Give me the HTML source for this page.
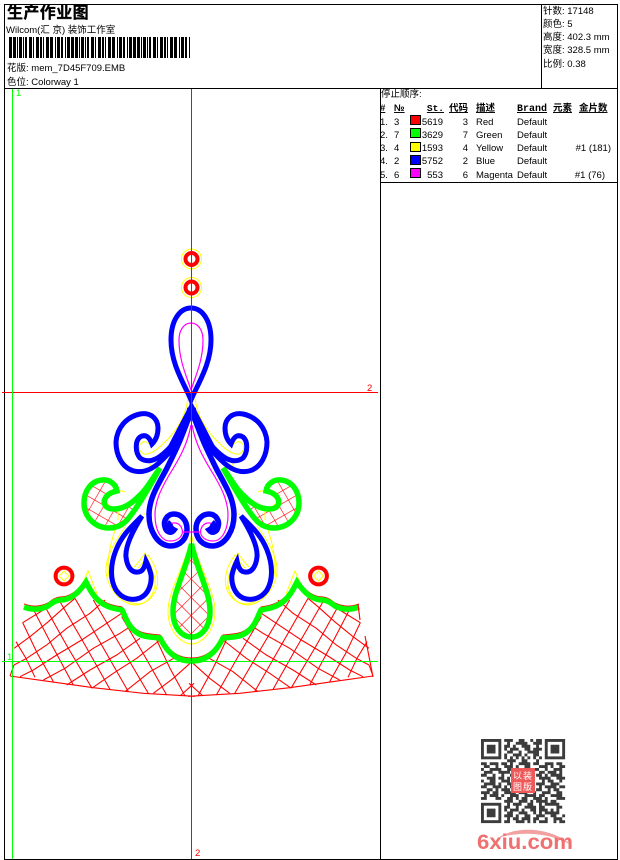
<!DOCTYPE html>
<html><head><meta charset="utf-8"><style>
html,body{margin:0;padding:0;background:#fff;width:620px;height:860px;overflow:hidden}
svg{display:block}
text{font-family:"Liberation Sans","WenQuanYi Zen Hei","Noto Sans CJK SC",sans-serif;font-size:9.5px;fill:#000}
.h{font-weight:bold;text-decoration:underline}
</style></head><body>
<svg width="620" height="860" viewBox="0 0 620 860" xmlns="http://www.w3.org/2000/svg">
<defs>
<pattern id="ph" width="13" height="13" patternUnits="userSpaceOnUse" patternTransform="translate(191 560) rotate(45)">
<path d="M0 0H13M0 0V13" stroke="#f00" stroke-width="1.2" fill="none"/></pattern>
<pattern id="pl" width="11" height="11" patternUnits="userSpaceOnUse" patternTransform="translate(100 490) rotate(30)">
<path d="M0 0H11M0 0V11" stroke="#f00" stroke-width="1.2" fill="none"/></pattern>
<g id="half">
 <!-- big hatch: drawn in 3x coordinates -->
 <g transform="translate(10 590) scale(.33333)" fill="none" stroke="#f00" stroke-width="3.2">
  <path d="M18 155L48 205L75 262M38 98L82 190L130 275M70 58L128 170L190 285M105 50L172 170L245 293M147 30L225 165L300 298M195 25L275 165L355 305M250 30L330 165L415 310M335 80L405 200L470 315M440 150L480 235L525 318"/>
  <path d="M12 175L60 140L115 95L165 50L195 25M12 225L50 205L110 165L170 115L240 70L285 30M30 260L70 240L140 195L215 150L290 100L335 70M100 270L165 235L250 175L330 130L360 110M170 285L240 240L320 195L390 145M245 295L310 250L380 205L450 150M345 305L420 245L500 200M430 310L490 265L540 220M510 318L552 280M38 98L100 60"/>
  <path d="M0 258L100 272L250 293L400 310L555 319M0 258L12 225"/>
 </g>
 <path d="M24 607C32 610 40 610 48 606C52 603 54 601 60 600C70 600 78 594 86 582C90 590 95 600 105 605C112 609 118 609 122 610C126 618 128 626 136 632C142 637 150 637 160 638C165 648 172 656 180 659C185 661 190 661 192 661" transform="translate(0 -3)" fill="none" stroke="#f00" stroke-width="1"/>
 <path d="M80 590L88 571L97 594" fill="none" stroke="#ff0" stroke-width="1"/>
 <path d="M24 607C32 610 40 610 48 606C52 603 54 601 60 600C70 600 78 594 86 582C90 590 95 600 105 605C112 609 118 609 122 610C126 618 128 626 136 632C142 637 150 637 160 638C165 648 172 656 180 659C185 661 190 661 192 661" fill="none" stroke="#0f0" stroke-width="5.5"/>
 <!-- leaf -->
 <path d="M158 472L140 503L125 525L113 529L93 523L83 503L90 487L103 479L113 483L117 491L107 495L104 503L112 509L125 507L143 490Z" fill="url(#pl)"/>
 <path d="M107 500C112 490 120 490 125 492M108 504C112 509 115 509 120 508C135 505 150 490 160 468M150 460V470M115 530C105 560 105 585 122 598C135 607 147 606 155 592C160 582 158 568 148 555C144 562 141 565 138 568M118 508V520M143 514H152" fill="none" stroke="#ff0" stroke-width="1"/>
 <path d="M160 468C150 482 146 490 138 497C130 505 122 509 114 509C105 509 102 503 106 497C109 493 113 492 117 491C116 484 109 479 102 480C91 481 84 491 84 503C84 518 96 528 109 528C122 528 128 520 136 508C145 495 152 482 160 468Z" fill="none" stroke="#0f0" stroke-width="5.5"/>
 <!-- top spiral -->
 <path d="M188 399C185 418 176 432 164 443C157 450 150 455 144 454C138 452 138 444 143 442C147 441 150 444 152 447" fill="none" stroke="#ff0" stroke-width="1"/>
 <path d="M190 412C186 430 178 445 167 455C157 466 147 474 134 471C122 468 116 455 116 442C117 428 126 417 140 414C151 412 158 419 158 428C158 436 155 441 152 444C149 436 145 434 140 437C135 441 135 452 140 458C147 463 155 461 163 454C174 445 183 432 190 412Z" fill="none" stroke="#00f" stroke-width="5"/>
 <path d="M191 402L165 452L178 450L191 420Z" fill="#00f"/>
 <!-- heart -->
 <path d="M190 408C186 430 176 450 166 470C156 488 149 500 149 515C149 530 157 545 170 546C181 546 187 538 187 529C187 520 181 514 174 514C167 514 163 521 165 527C166 532 171 534 174 530C170 528 169 524 171 522" fill="none" stroke="#00f" stroke-width="5.5"/>
 <path d="M191 425C187 447 177 462 168 477C160 491 155 502 155 515C155 530 161 541 170 541C178 541 184 536 182 529C180 522 172 522 172 524M183 532H192" fill="none" stroke="#f0f" stroke-width="1.2"/>
 <!-- lower curl -->
 <path d="M126 526C112 545 105 560 106 572C108 590 122 604 135 605C148 605 156 592 155 580C154 572 149 562 145 553C141 560 137 564 134 567" fill="none" stroke="#ff0" stroke-width="1"/>
 <path d="M142 516C131 527 122 535 116 550C110 565 110 580 116 590C122 599 132 601 140 598C149 594 152 583 151 575C150 570 148 565 146 561C145 566 143 572 138 572C131 573 127 566 126 557C125 547 132 532 142 516Z" fill="none" stroke="#00f" stroke-width="5"/>
</g>
</defs>

<!-- frame -->
<g shape-rendering="crispEdges" fill="none" stroke="#000" stroke-width="1">
<rect x="4.5" y="4.5" width="613" height="855"/>
<path d="M4 88.5H618M541.5 5V88M380.5 88V860M380 182.5H618"/>
</g>

<!-- header -->
<text x="7" y="18" style="font-size:16px;font-weight:bold;letter-spacing:.4px;stroke:#000;stroke-width:.3">生产作业图</text>
<text x="6" y="33">Wilcom(汇 京) 装饰工作室</text>
<line x1="9" y1="47.5" x2="191" y2="47.5" stroke="#000" stroke-width="21" shape-rendering="crispEdges" stroke-dasharray="3 1 3 1 1 1 3 1 1 1 2 2 3 1 1 2 3 1 2 1 1 2 3 1 3 2 1 1 3 1 2 2 1 1 3 1"/>
<text x="7" y="71">花版: mem_7D45F709.EMB</text>
<text x="7" y="85">色位: Colorway 1</text>

<text x="543" y="14">针数: 17148</text>
<text x="543" y="27">颜色: 5</text>
<text x="543" y="40">高度: 402.3 mm</text>
<text x="543" y="53">宽度: 328.5 mm</text>
<text x="543" y="67">比例: 0.38</text>

<!-- table -->
<text x="381" y="97">停止顺序:</text>
<g>
<text x="380" y="111" class="h">#</text>
<text x="394" y="111" class="h">№</text>
<text x="444" y="111" class="h" text-anchor="end" style="font-family:'Liberation Mono',monospace">St.</text>
<text x="449" y="111" class="h">代码</text>
<text x="476" y="111" class="h">描述</text>
<text x="517" y="111" class="h" style="font-family:'Liberation Mono',monospace;font-size:10px">Brand</text>
<text x="553" y="111" class="h">元素</text>
<text x="579" y="111" class="h">金片数</text>
</g>
<g shape-rendering="crispEdges" stroke="#000">
<rect x="410.5" y="115.5" width="10" height="9" fill="#f00"/>
<rect x="410.5" y="128.5" width="10" height="9" fill="#0f0"/>
<rect x="410.5" y="142.5" width="10" height="9" fill="#ff0"/>
<rect x="410.5" y="155.5" width="10" height="9" fill="#00f"/>
<rect x="410.5" y="168.5" width="10" height="9" fill="#f0f"/>
</g>
<g>
<text x="380" y="125">1.</text><text x="394" y="125">3</text><text x="443" y="125" text-anchor="end">5619</text><text x="468" y="125" text-anchor="end">3</text><text x="476" y="125">Red</text><text x="517" y="125">Default</text>
<text x="380" y="138">2.</text><text x="394" y="138">7</text><text x="443" y="138" text-anchor="end">3629</text><text x="468" y="138" text-anchor="end">7</text><text x="476" y="138">Green</text><text x="517" y="138">Default</text>
<text x="380" y="151">3.</text><text x="394" y="151">4</text><text x="443" y="151" text-anchor="end">1593</text><text x="468" y="151" text-anchor="end">4</text><text x="476" y="151">Yellow</text><text x="517" y="151">Default</text><text x="611" y="151" text-anchor="end">#1 (181)</text>
<text x="380" y="164">4.</text><text x="394" y="164">2</text><text x="443" y="164" text-anchor="end">5752</text><text x="468" y="164" text-anchor="end">2</text><text x="476" y="164">Blue</text><text x="517" y="164">Default</text>
<text x="380" y="178">5.</text><text x="394" y="178">6</text><text x="443" y="178" text-anchor="end">553</text><text x="468" y="178" text-anchor="end">6</text><text x="476" y="178">Magenta</text><text x="517" y="178">Default</text><text x="605" y="178" text-anchor="end">#1 (76)</text>
</g>

<!-- embroidery -->
<g>
<use href="#half"/>
<use href="#half" transform="translate(383 0) scale(-1 1)"/>
<path d="M373 677L365 636M360 620L358 604" fill="none" stroke="#f00" stroke-width="1.1"/>
<!-- centre drop -->
<path d="M191.5 556C186 575 174 592 174 610C174 628 183 636 191.5 636C200 636 209 628 209 610C209 592 197 575 191.5 556Z" fill="url(#ph)"/>
<path d="M191.5 535C186 565 168 590 168 611C168 632 182 644 191.5 644C201 644 215 632 215 611C215 590 197 565 191.5 535Z" fill="none" stroke="#ff0" stroke-width="1"/>
<path d="M191.5 544C186 570 173 592 173 611C173 629 183 637 191.5 637C200 637 210 629 210 611C210 592 197 570 191.5 544Z" fill="none" stroke="#0f0" stroke-width="5.5"/>
<!-- top drop -->
<path d="M191 400C185 385 171 365 171 340C171 320 180 308 191 308C202 308 211 320 211 340C211 365 197 385 191 400Z" fill="none" stroke="#00f" stroke-width="5"/>
<path d="M191 390C186 375 179 360 179 340C179 330 184 323 191 323C198 323 203 330 203 340C203 360 196 375 191 390Z" fill="none" stroke="#f0f" stroke-width="1.2"/>
<path d="M191 396V415" stroke="#00f" stroke-width="3"/>
<!-- rings -->
<circle cx="191.5" cy="259" r="10" fill="none" stroke="#ff0" stroke-width="1"/>
<circle cx="191.5" cy="259" r="6" fill="none" stroke="#f00" stroke-width="4"/>
<circle cx="191.5" cy="287.5" r="10" fill="none" stroke="#ff0" stroke-width="1"/>
<circle cx="191.5" cy="287.5" r="6" fill="none" stroke="#f00" stroke-width="4"/>
<circle cx="64" cy="576" r="8.4" fill="none" stroke="#f00" stroke-width="4"/>
<path d="M64 571L69 576L64 581L59 576Z" fill="none" stroke="#ff0"/>
<circle cx="318.5" cy="576" r="8.4" fill="none" stroke="#f00" stroke-width="4"/>
<path d="M318.5 571L323.5 576L318.5 581L313.5 576Z" fill="none" stroke="#ff0"/>
</g>

<!-- guides -->
<g shape-rendering="crispEdges" stroke-width="1">
<path d="M191.5 89V859M2 392.5H378" stroke="#f00" fill="none"/>
<path d="M12.5 89V859M2 661.5H378" stroke="#0f0" fill="none"/>
</g>
<text x="16" y="96" style="fill:#0f0">1</text>
<text x="7" y="660" style="fill:#0f0">1</text>
<text x="367" y="391" style="fill:#f00">2</text>
<text x="195" y="856" style="fill:#f00">2</text>

<!-- QR -->
<g transform="translate(481 739) scale(2.9)" fill="none" stroke="#3c3c3c" stroke-width="1">
<rect x=".5" y=".5" width="6" height="6"/><rect x="22.5" y=".5" width="6" height="6"/><rect x=".5" y="22.5" width="6" height="6"/>
<path stroke-width="3" d="M2 3.5h3M24 3.5h3M2 25.5h3"/>
<path d="M8 .5h3M13 .5h2M17 .5h1M19 .5h2M9 1.5h1M12 1.5h4M18 1.5h3M8 2.5h2M11 2.5h1M14 2.5h3M19 2.5h1M8 3.5h1M10 3.5h3M15 3.5h2M18 3.5h3M9 4.5h2M13 4.5h1M16 4.5h4M8 5.5h1M11 5.5h3M15 5.5h1M18 5.5h2M8 6.5h1M10 6.5h1M12 6.5h1M14 6.5h1M16 6.5h1M18 6.5h1M20 6.5h1M9 7.5h3M14 7.5h2M19 7.5h1M0 8.5h2M3 8.5h3M7 8.5h2M10 8.5h1M13 8.5h4M18 8.5h2M22 8.5h3M26 8.5h2M1 9.5h2M5 9.5h1M8 9.5h3M12 9.5h1M15 9.5h2M20 9.5h3M24 9.5h1M27 9.5h2M0 10.5h1M3 10.5h4M9 10.5h2M13 10.5h2M17 10.5h3M22 10.5h1M25 10.5h3M1 11.5h3M6 11.5h4M12 11.5h2M20 11.5h2M23 11.5h3M27 11.5h1M0 12.5h2M4 12.5h1M7 12.5h1M10 12.5h2M19 12.5h2M22 12.5h1M24 12.5h4M2 13.5h3M6 13.5h2M9 13.5h1M20 13.5h4M26 13.5h3M0 14.5h1M3 14.5h2M7 14.5h3M21 14.5h1M23 14.5h2M27 14.5h1M1 15.5h4M6 15.5h1M9 15.5h2M19 15.5h3M24 15.5h3M0 16.5h2M4 16.5h3M8 16.5h1M10 16.5h1M20 16.5h1M22 16.5h4M27 16.5h2M2 17.5h2M5 17.5h1M7 17.5h3M19 17.5h2M23 17.5h1M25 17.5h2M0 18.5h3M4 18.5h2M8 18.5h4M13 18.5h3M18 18.5h1M21 18.5h3M26 18.5h2M1 19.5h1M3 19.5h3M7 19.5h1M10 19.5h3M15 19.5h4M20 19.5h2M24 19.5h4M0 20.5h2M5 20.5h2M9 20.5h2M12 20.5h1M14 20.5h2M18 20.5h3M22 20.5h1M26 20.5h3M8 21.5h3M13 21.5h3M17 21.5h1M19 21.5h4M24 21.5h2M9 22.5h1M11 22.5h3M16 22.5h2M20 22.5h1M22 22.5h5M8 23.5h2M12 23.5h1M15 23.5h4M20 23.5h2M26 23.5h2M8 24.5h1M10 24.5h3M14 24.5h1M17 24.5h2M20 24.5h3M24 24.5h1M26 24.5h1M9 25.5h2M13 25.5h3M18 25.5h1M20 25.5h1M22 25.5h5M8 26.5h3M12 26.5h1M15 26.5h2M19 26.5h3M24 26.5h2M28 26.5h1M9 27.5h1M11 27.5h2M14 27.5h3M18 27.5h2M22 27.5h1M25 27.5h3M8 28.5h2M12 28.5h3M16 28.5h1M18 28.5h1M20 28.5h3M25 28.5h1M27 28.5h2"/>
</g>
<rect x="511" y="768" width="24" height="25" fill="#ee5a5a"/>
<text x="513" y="779" style="fill:#fff;font-size:9px">以</text><text x="523" y="779" style="fill:#fff;font-size:9px">装</text>
<text x="513" y="790" style="fill:#fff;font-size:9px">图</text><text x="523" y="790" style="fill:#fff;font-size:9px">版</text>

<!-- logo -->
<path d="M498 838C515 826 550 826 573 846C550 832 520 831 498 838Z" fill="#f2a0a0"/>
<text x="477" y="849" textLength="96" lengthAdjust="spacingAndGlyphs" style="font-size:21px;font-weight:bold;fill:#f07070">6xiu.com</text>
</svg>
</body></html>
